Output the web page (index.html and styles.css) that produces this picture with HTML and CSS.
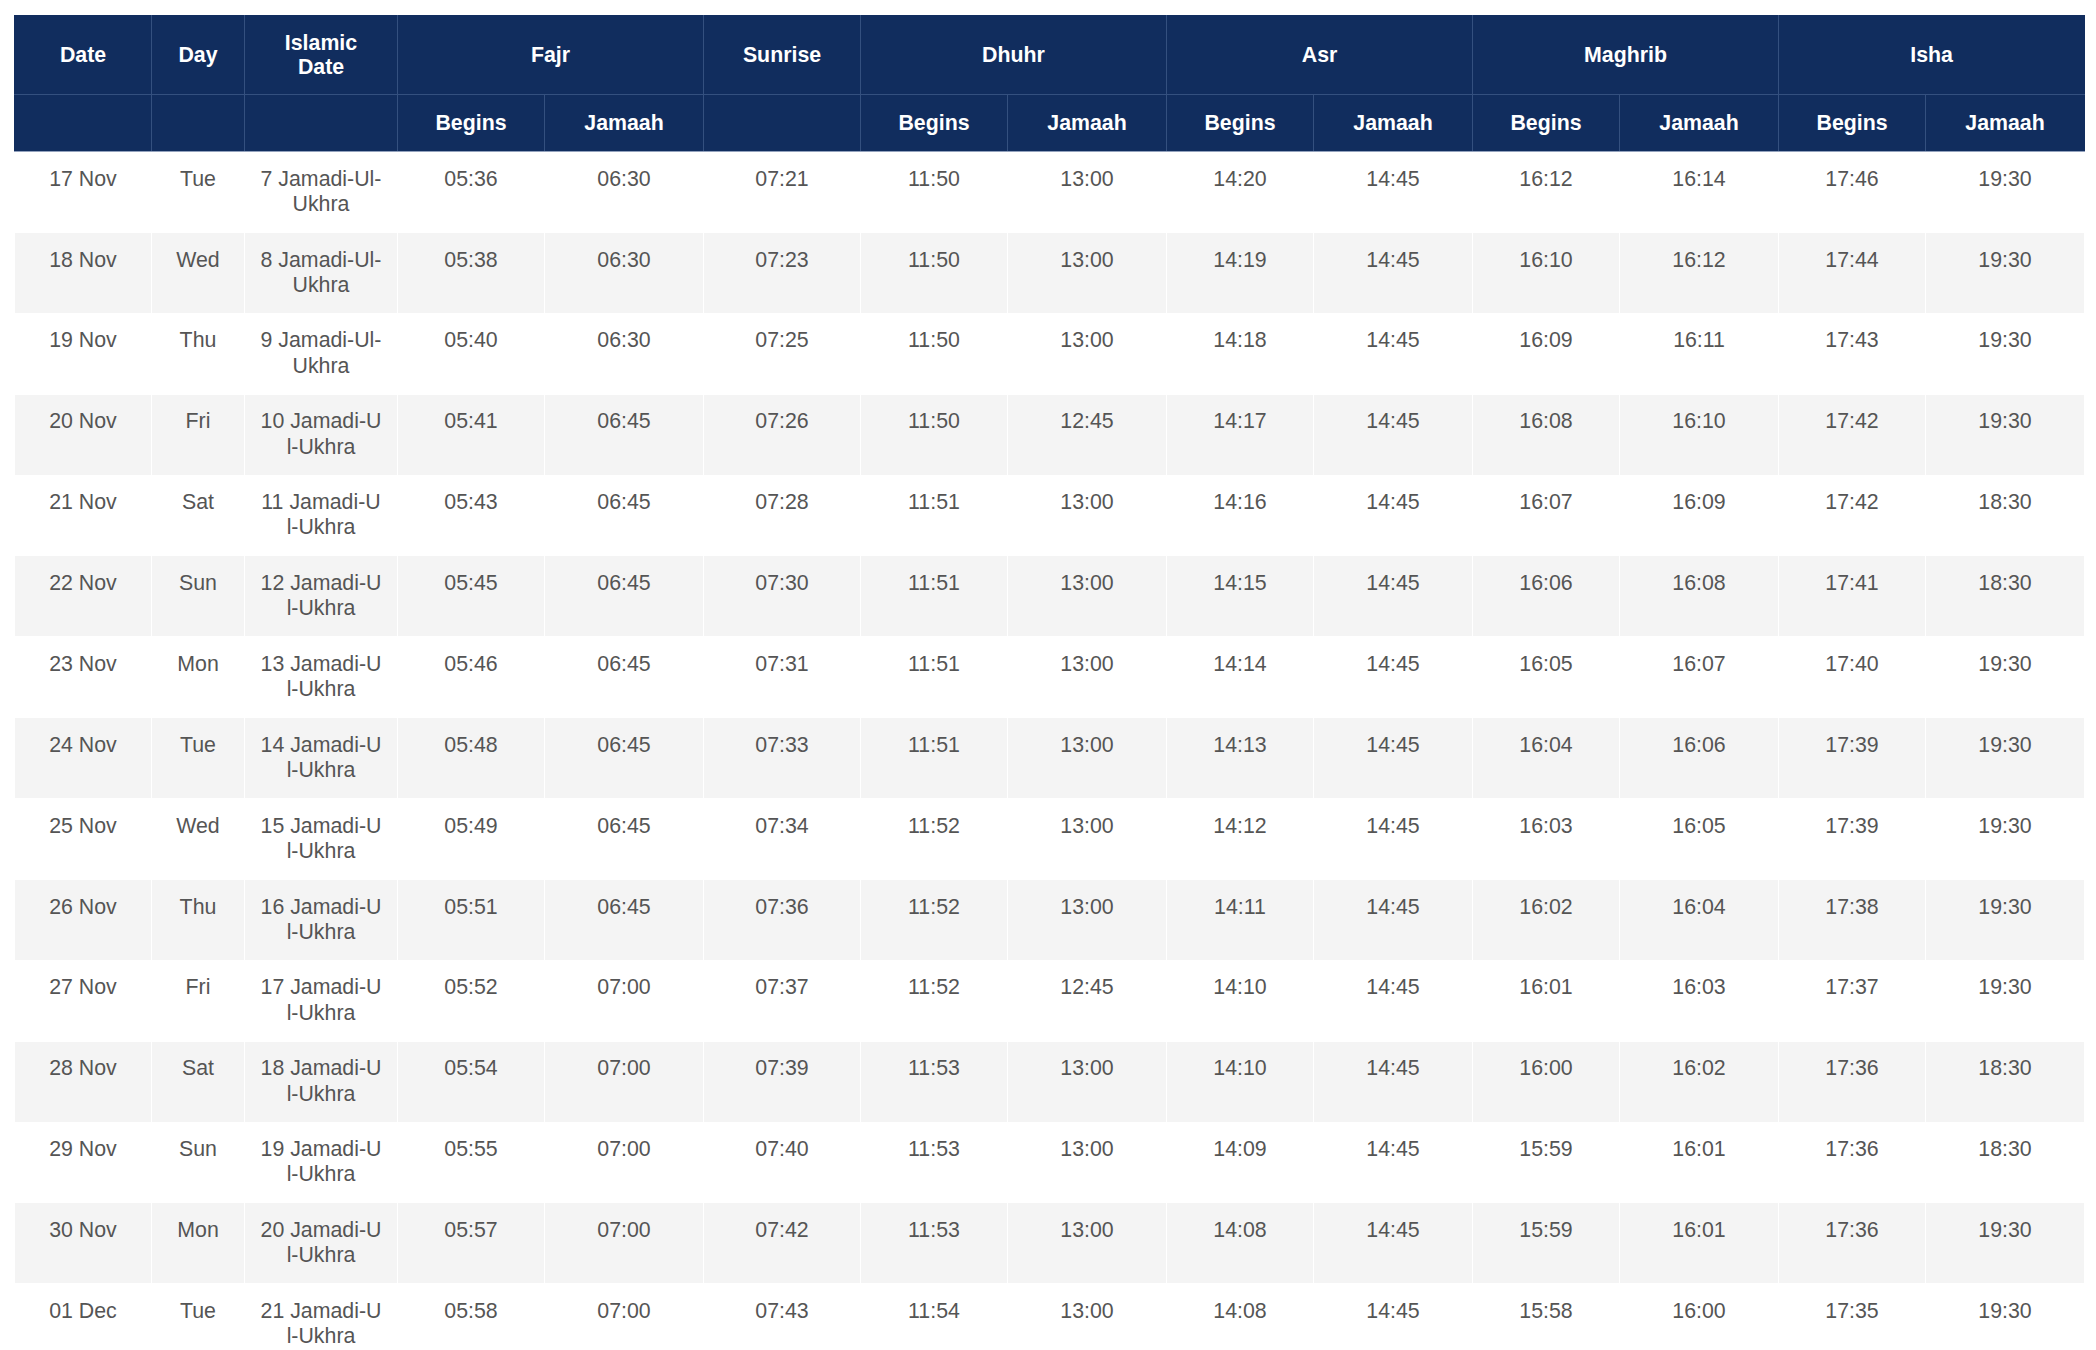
FILE: index.html
```html
<!DOCTYPE html>
<html lang="en">
<head>
<meta charset="utf-8">
<title>Prayer Timetable</title>
<link rel="stylesheet" href="styles.css">
</head>
<body>
<div class="wrap">
<table class="timetable">
<colgroup>
<col class="c-date"><col class="c-day"><col class="c-islamic">
<col class="c-begins"><col class="c-jamaah">
<col class="c-sunrise">
<col class="c-begins"><col class="c-jamaah">
<col class="c-begins"><col class="c-jamaah">
<col class="c-begins"><col class="c-jamaah">
<col class="c-begins"><col class="c-jamaah">
</colgroup>
<thead>
<tr class="head-main">
<th>Date</th><th>Day</th><th>Islamic Date</th>
<th colspan="2">Fajr</th><th>Sunrise</th><th colspan="2">Dhuhr</th><th colspan="2">Asr</th><th colspan="2">Maghrib</th><th colspan="2">Isha</th>
</tr>
<tr class="head-sub">
<th></th><th></th><th></th>
<th>Begins</th><th>Jamaah</th><th></th><th>Begins</th><th>Jamaah</th><th>Begins</th><th>Jamaah</th><th>Begins</th><th>Jamaah</th><th>Begins</th><th>Jamaah</th>
</tr>
</thead>
<tbody>
<tr><td>17 Nov</td><td>Tue</td><td class="isl">7 Jamadi-Ul-Ukhra</td><td>05:36</td><td>06:30</td><td>07:21</td><td>11:50</td><td>13:00</td><td>14:20</td><td>14:45</td><td>16:12</td><td>16:14</td><td>17:46</td><td>19:30</td></tr>
<tr><td>18 Nov</td><td>Wed</td><td class="isl">8 Jamadi-Ul-Ukhra</td><td>05:38</td><td>06:30</td><td>07:23</td><td>11:50</td><td>13:00</td><td>14:19</td><td>14:45</td><td>16:10</td><td>16:12</td><td>17:44</td><td>19:30</td></tr>
<tr><td>19 Nov</td><td>Thu</td><td class="isl">9 Jamadi-Ul-Ukhra</td><td>05:40</td><td>06:30</td><td>07:25</td><td>11:50</td><td>13:00</td><td>14:18</td><td>14:45</td><td>16:09</td><td>16:11</td><td>17:43</td><td>19:30</td></tr>
<tr><td>20 Nov</td><td>Fri</td><td class="isl">10 Jamadi-Ul-Ukhra</td><td>05:41</td><td>06:45</td><td>07:26</td><td>11:50</td><td>12:45</td><td>14:17</td><td>14:45</td><td>16:08</td><td>16:10</td><td>17:42</td><td>19:30</td></tr>
<tr><td>21 Nov</td><td>Sat</td><td class="isl">11 Jamadi-Ul-Ukhra</td><td>05:43</td><td>06:45</td><td>07:28</td><td>11:51</td><td>13:00</td><td>14:16</td><td>14:45</td><td>16:07</td><td>16:09</td><td>17:42</td><td>18:30</td></tr>
<tr><td>22 Nov</td><td>Sun</td><td class="isl">12 Jamadi-Ul-Ukhra</td><td>05:45</td><td>06:45</td><td>07:30</td><td>11:51</td><td>13:00</td><td>14:15</td><td>14:45</td><td>16:06</td><td>16:08</td><td>17:41</td><td>18:30</td></tr>
<tr><td>23 Nov</td><td>Mon</td><td class="isl">13 Jamadi-Ul-Ukhra</td><td>05:46</td><td>06:45</td><td>07:31</td><td>11:51</td><td>13:00</td><td>14:14</td><td>14:45</td><td>16:05</td><td>16:07</td><td>17:40</td><td>19:30</td></tr>
<tr><td>24 Nov</td><td>Tue</td><td class="isl">14 Jamadi-Ul-Ukhra</td><td>05:48</td><td>06:45</td><td>07:33</td><td>11:51</td><td>13:00</td><td>14:13</td><td>14:45</td><td>16:04</td><td>16:06</td><td>17:39</td><td>19:30</td></tr>
<tr><td>25 Nov</td><td>Wed</td><td class="isl">15 Jamadi-Ul-Ukhra</td><td>05:49</td><td>06:45</td><td>07:34</td><td>11:52</td><td>13:00</td><td>14:12</td><td>14:45</td><td>16:03</td><td>16:05</td><td>17:39</td><td>19:30</td></tr>
<tr><td>26 Nov</td><td>Thu</td><td class="isl">16 Jamadi-Ul-Ukhra</td><td>05:51</td><td>06:45</td><td>07:36</td><td>11:52</td><td>13:00</td><td>14:11</td><td>14:45</td><td>16:02</td><td>16:04</td><td>17:38</td><td>19:30</td></tr>
<tr><td>27 Nov</td><td>Fri</td><td class="isl">17 Jamadi-Ul-Ukhra</td><td>05:52</td><td>07:00</td><td>07:37</td><td>11:52</td><td>12:45</td><td>14:10</td><td>14:45</td><td>16:01</td><td>16:03</td><td>17:37</td><td>19:30</td></tr>
<tr><td>28 Nov</td><td>Sat</td><td class="isl">18 Jamadi-Ul-Ukhra</td><td>05:54</td><td>07:00</td><td>07:39</td><td>11:53</td><td>13:00</td><td>14:10</td><td>14:45</td><td>16:00</td><td>16:02</td><td>17:36</td><td>18:30</td></tr>
<tr><td>29 Nov</td><td>Sun</td><td class="isl">19 Jamadi-Ul-Ukhra</td><td>05:55</td><td>07:00</td><td>07:40</td><td>11:53</td><td>13:00</td><td>14:09</td><td>14:45</td><td>15:59</td><td>16:01</td><td>17:36</td><td>18:30</td></tr>
<tr><td>30 Nov</td><td>Mon</td><td class="isl">20 Jamadi-Ul-Ukhra</td><td>05:57</td><td>07:00</td><td>07:42</td><td>11:53</td><td>13:00</td><td>14:08</td><td>14:45</td><td>15:59</td><td>16:01</td><td>17:36</td><td>19:30</td></tr>
<tr><td>01 Dec</td><td>Tue</td><td class="isl">21 Jamadi-Ul-Ukhra</td><td>05:58</td><td>07:00</td><td>07:43</td><td>11:54</td><td>13:00</td><td>14:08</td><td>14:45</td><td>15:58</td><td>16:00</td><td>17:35</td><td>19:30</td></tr>
</tbody>
</table>
</div>
</body>
</html>
```
FILE: styles.css
```css
html, body {
  margin: 0;
  padding: 0;
  background: #ffffff;
}

body {
  font-family: "Liberation Sans", Arial, Helvetica, sans-serif;
  font-size: 21.33px;
  line-height: 25.3px;
  color: #555555;
}

.wrap {
  padding: 15px 12px 0 14px;
}

.timetable {
  width: 2070px;
  table-layout: fixed;
  border-collapse: collapse;
  border-spacing: 0;
}

.c-date { width: 137px; }
.c-day { width: 93px; }
.c-islamic { width: 153px; }
.c-begins { width: 147px; }
.c-jamaah { width: 159px; }
.c-sunrise { width: 157px; }

.timetable th {
  background: #112d5e;
  color: #ffffff;
  font-weight: bold;
  line-height: 24px;
  text-align: center;
  vertical-align: middle;
  padding: 16px 15px;
  border: 1px solid #34507f;
}

.timetable .head-main th {
  padding-top: 15px;
  padding-bottom: 15px;
  border-top-color: #112d5e;
}

.timetable .head-sub th {
  border-bottom: 1px solid #93a2bd;
}

.timetable thead th:first-child {
  border-left-color: #112d5e;
}

.timetable thead th:last-child {
  border-right-color: #112d5e;
}

.timetable td {
  text-align: center;
  vertical-align: top;
  padding: 14.7px 15px 14.6px;
  border: 1px solid #ffffff;
}

.timetable td.isl {
  word-break: break-all;
}

.timetable tbody tr:nth-child(even) td {
  background: #f4f4f4;
}
```
